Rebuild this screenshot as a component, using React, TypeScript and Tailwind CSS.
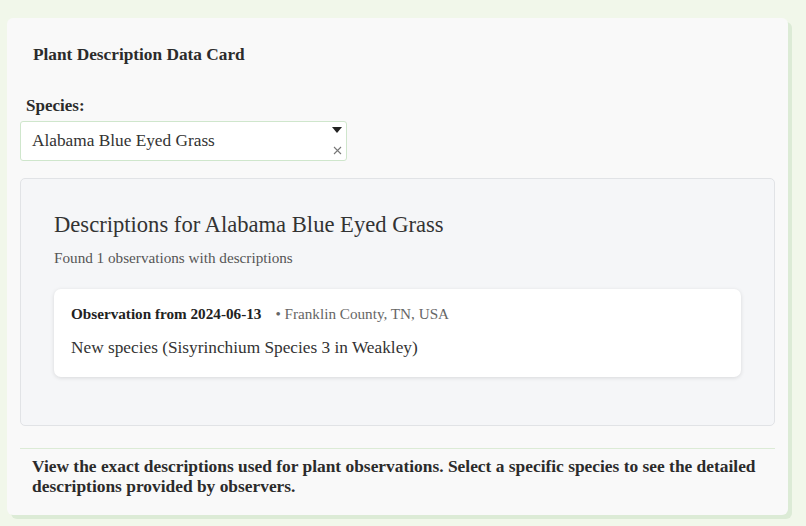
export default function App() {
  return (
    <div className="min-h-screen bg-[#f1f7ea] pt-[18px] pl-[7px] font-['Liberation_Serif',serif] text-[#333]">
      <div className="w-[781px] h-[497px] bg-[#f9f9f9] rounded-[6px] shadow-[4px_4px_0_#dcebd6] px-[13px]">
        {/* Title */}
        <h2 className="pt-[25px] pl-[13px] text-[17.3px] font-bold leading-[24px] text-[#2b2b2b]">
          Plant Description Data Card
        </h2>

        {/* Species select */}
        <label className="block mt-[29px] pl-[6px] text-[17px] font-bold leading-[20px] text-[#2b2b2b]">
          Species:
        </label>
        <div className="mt-[5px] w-[327px] h-[40px] bg-white border border-[#cfe6cc] rounded-[3px] flex items-center justify-between pl-[11px] pr-[4px]">
          <span className="text-[17.3px] text-[#333]">Alabama Blue Eyed Grass</span>
          <div className="flex flex-col items-center h-full justify-between py-[5px]">
            <svg width="10" height="6" viewBox="0 0 10 6">
              <path d="M0 0 L10 0 L5 6 Z" fill="#222" />
            </svg>
            <svg width="9" height="9" viewBox="0 0 9 9">
              <path d="M1 1 L8 8 M8 1 L1 8" stroke="#777" strokeWidth="1.1" />
            </svg>
          </div>
        </div>

        {/* Results panel */}
        <div className="mt-[17px] h-[248px] bg-[#f5f6f8] border border-[#e1e3e6] rounded-[5px] px-[33px] pt-[32px]">
          <h3 className="text-[22.6px] leading-[28px] text-[#333]">
            Descriptions for Alabama Blue Eyed Grass
          </h3>
          <p className="mt-[10px] text-[15.2px] leading-[18px] text-[#555]">
            Found 1 observations with descriptions
          </p>
          <div className="mt-[22px] h-[88px] bg-white rounded-[7px] shadow-[0_1px_4px_rgba(0,0,0,0.12)] px-[17px] pt-[15px]">
            <div className="flex items-baseline leading-[20px]">
              <span className="text-[15.2px] font-bold text-[#222]">Observation from 2024-06-13</span>
              <span className="ml-[14px] text-[15.2px] text-[#666]">• Franklin County, TN, USA</span>
            </div>
            <p className="mt-[13px] text-[17.3px] leading-[22px] text-[#333]">
              New species (Sisyrinchium Species 3 in Weakley)
            </p>
          </div>
        </div>

        {/* Footer */}
        <div className="mt-[22px] border-t border-[#dcebd6] pt-[7px] pl-[12px] pr-[12px]">
          <p className="text-[17.4px] font-bold leading-[20px] text-[#2b2b2b]">
            View the exact descriptions used for plant observations. Select a specific species to see the detailed descriptions provided by observers.
          </p>
        </div>
      </div>
    </div>
  );
}
